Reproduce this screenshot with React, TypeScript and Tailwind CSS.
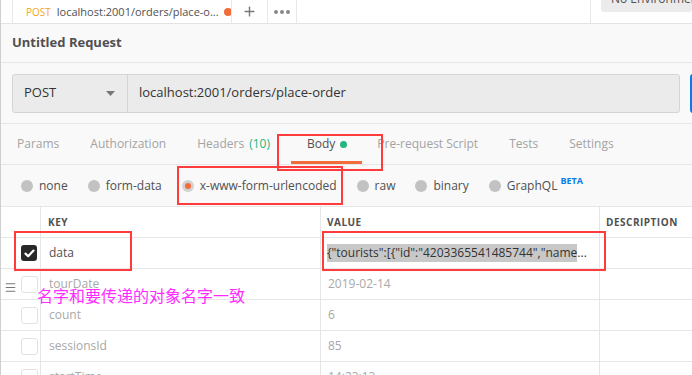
import { Plus, Menu } from "lucide-react";

const tabs = [
  { label: "Params" },
  { label: "Authorization" },
  { label: "Headers", badge: "(10)" },
  { label: "Body", active: true },
  { label: "Pre-request Script" },
  { label: "Tests" },
  { label: "Settings" },
];

const bodyTypes = [
  { label: "none" },
  { label: "form-data" },
  { label: "x-www-form-urlencoded", selected: true },
  { label: "raw" },
  { label: "binary" },
  { label: "GraphQL", beta: true },
];

const rows = [
  { key: "tourDate", value: "2019-02-14" },
  { key: "count", value: "6" },
  { key: "sessionsId", value: "85" },
  { key: "startTime", value: "14:23:13" },
];

const Checkbox = ({ checked }: { checked?: boolean }) =>
  checked ? (
    <div className="w-[16px] h-[16px] rounded-[3px] bg-[#282828] flex items-center justify-center">
      <svg width="11" height="9" viewBox="0 0 11 9">
        <path d="M1.5 4.6 L4.2 7.2 L9.5 1.6" stroke="white" strokeWidth="2.2" fill="none" strokeLinecap="round" strokeLinejoin="round" />
      </svg>
    </div>
  ) : (
    <div className="w-[17px] h-[17px] rounded-[3px] border border-[#e2e2e2] bg-white" />
  );

export default function App() {
  return (
    <div
      className="relative w-[692px] h-[375px] overflow-hidden bg-[#f9f9f9] border-l border-[#cfcfcf]"
      style={{ fontFamily: '"Open Sans", "Noto Sans", sans-serif' }}
    >
      {/* tab strip */}
      <div className="h-[24px] bg-white border-b border-[#e3e3e3] flex">
        <div className="w-[11px] shrink-0" />
        <div className="w-[220px] shrink-0 flex items-center pl-[13px] border-r border-l border-[#e8e8e8] h-[24px] overflow-hidden">
          <span className="text-[10px] text-[#f5a623] mr-[6px]">POST</span>
          <span className="text-[11px] text-[#505050] whitespace-nowrap">localhost:2001/orders/place-o...</span>
          <span className="ml-[5px] w-[8px] h-[8px] shrink-0 rounded-full bg-[#f26b3a]" />
        </div>
        <div className="w-[36px] shrink-0 flex items-center justify-center border-r border-[#e8e8e8] h-[23px]">
          <Plus className="w-[15px] h-[15px] text-[#777]" strokeWidth={2.2} />
        </div>
        <div className="w-[29px] shrink-0 flex items-center justify-center gap-[2px] border-r border-[#e8e8e8] h-[23px]">
          <span className="w-[4px] h-[4px] rounded-full bg-[#888]" />
          <span className="w-[4px] h-[4px] rounded-full bg-[#888]" />
          <span className="w-[4px] h-[4px] rounded-full bg-[#888]" />
        </div>
        <div className="flex-1" />
        <div className="w-[102px] shrink-0 border-l border-[#e8e8e8] h-[23px] pl-[10px]">
          <div className="-mt-[14px] h-[26px] rounded-[3px] bg-[#ebebeb] flex items-center pl-[10px] text-[12px] text-[#505050] whitespace-nowrap">
            No Environment
          </div>
        </div>
      </div>

      {/* title */}
      <div className="h-[39px] px-[11px] flex items-center border-b border-[#e6e6e6]">
        <span className="text-[13px] font-bold text-[#505050]">Untitled Request</span>
      </div>

      {/* url bar */}
      <div className="h-[61px] pl-[11px] flex items-center border-b border-[#e6e6e6]">
        <div className="flex shrink-0 h-[39px] w-[668px] rounded-[3px] border border-[#d4d4d4] bg-[#ebebeb]">
          <div className="w-[115px] flex items-center justify-between pl-[11px] pr-[12px] border-r border-[#d4d4d4]">
            <span className="text-[13px] text-[#333]">POST</span>
            <svg width="9" height="5" viewBox="0 0 9 5"><path d="M0 0 H9 L4.5 5 Z" fill="#777" /></svg>
          </div>
          <div className="flex-1 flex items-center pl-[11px] text-[13px] text-[#333]">
            localhost:2001/orders/place-order
          </div>
        </div>
        <div className="ml-[10px] shrink-0 h-[39px] w-[20px] rounded-l-[3px] bg-[#097bed]" />
      </div>

      {/* request tabs */}
      <div className="h-[41px] flex items-center pl-[16px] border-b border-[#e6e6e6] text-[12px] text-[#a3a3a3]">
        {tabs.map((t) =>
          t.active ? (
            <div key={t.label} className="relative h-[41px] flex items-center -ml-[10px] mr-[15px] pl-[16px] pr-[15px]">
              <span className="text-[#505050]">{t.label}</span>
              <span className="ml-[5px] w-[7px] h-[7px] rounded-full bg-[#26b47f]" />
              <span className="absolute left-0 right-0 bottom-[1px] h-[3px] bg-[#f26b3a]" />
            </div>
          ) : (
            <div key={t.label} className="mr-[31px] whitespace-nowrap">
              {t.label}
              {t.badge && <span className="ml-[5px] text-[#26b47f]">{t.badge}</span>}
            </div>
          )
        )}
      </div>

      {/* body type radios */}
      <div className="h-[41px] flex items-center pl-[20px] gap-[20px] text-[12px] text-[#505050]">
        {bodyTypes.map((b) => (
          <div key={b.label} className="flex items-center">
            {b.selected ? (
              <span className="w-[12px] h-[12px] rounded-full bg-[#d2d2d2] flex items-center justify-center">
                <span className="w-[6px] h-[6px] rounded-full bg-[#f26b3a]" />
              </span>
            ) : (
              <span className="w-[12px] h-[12px] rounded-full bg-[#c2c2c2]" />
            )}
            <span className="ml-[6px]">{b.label}</span>
            {b.beta && <span className="ml-[3px] -mt-[10px] text-[9px] font-bold text-[#097bed]">BETA</span>}
          </div>
        ))}
      </div>

      {/* params table */}
      <div className="bg-white border-t border-[#e6e6e6]">
        <div className="flex h-[31px] border-b border-[#e6e6e6] text-[10px] font-bold text-[#505050] tracking-[0.5px]">
          <div className="w-[40px] border-r border-[#e6e6e6]" />
          <div className="w-[280px] border-r border-[#e6e6e6] pl-[7px] flex items-center">KEY</div>
          <div className="w-[279px] border-r border-[#e6e6e6] pl-[6px] flex items-center">VALUE</div>
          <div className="flex-1 pl-[6px] flex items-center">DESCRIPTION</div>
        </div>

        <div className="flex h-[31px] border-b border-[#e6e6e6] text-[12px]">
          <div className="w-[40px] border-r border-[#e6e6e6] flex items-center pl-[20px]">
            <Checkbox checked />
          </div>
          <div className="w-[280px] border-r border-[#e6e6e6] pl-[8px] flex items-center text-[#505050]">data</div>
          <div className="w-[279px] border-r border-[#e6e6e6] pl-[6px] flex items-center text-[#333] whitespace-nowrap overflow-hidden">
            <span className="bg-[#c8c8c8] leading-[18px]">{'{"tourists":[{"id":"4203365541485744","name'}</span>...
          </div>
          <div className="flex-1" />
        </div>

        {rows.map((r) => (
          <div key={r.key} className="flex h-[31px] border-b border-[#e6e6e6] text-[12px] text-[#a8a8a8]">
            <div className="w-[40px] border-r border-[#e6e6e6] flex items-center pl-[20px]">
              <Checkbox />
            </div>
            <div className="w-[280px] border-r border-[#e6e6e6] pl-[8px] flex items-center">{r.key}</div>
            <div className="w-[279px] border-r border-[#e6e6e6] pl-[7px] flex items-center">{r.value}</div>
            <div className="flex-1" />
          </div>
        ))}
      </div>

      {/* drag handle */}
      <Menu className="absolute left-[3px] top-[281px] w-[13px] h-[13px] text-[#777]" strokeWidth={2} />

      {/* annotation overlays */}
      <div className="absolute left-[276px] top-[134px] w-[106px] h-[37px] border-2 border-[#ff3b3b]" />
      <div className="absolute left-[176px] top-[166px] w-[166px] h-[39px] border-2 border-[#ff3b3b]" />
      <div className="absolute left-[13px] top-[231px] w-[118px] h-[40px] border-2 border-[#ff3b3b]" />
      <div className="absolute left-[321px] top-[231px] w-[284px] h-[40px] border-2 border-[#ff3b3b]" />
      <div
        className="absolute left-[36px] top-[285px] text-[16px] leading-[20px] text-[#ff2bff] whitespace-nowrap"
        style={{ fontFamily: '"Noto Sans CJK SC", sans-serif' }}
      >
        名字和要传递的对象名字一致
      </div>
    </div>
  );
}
